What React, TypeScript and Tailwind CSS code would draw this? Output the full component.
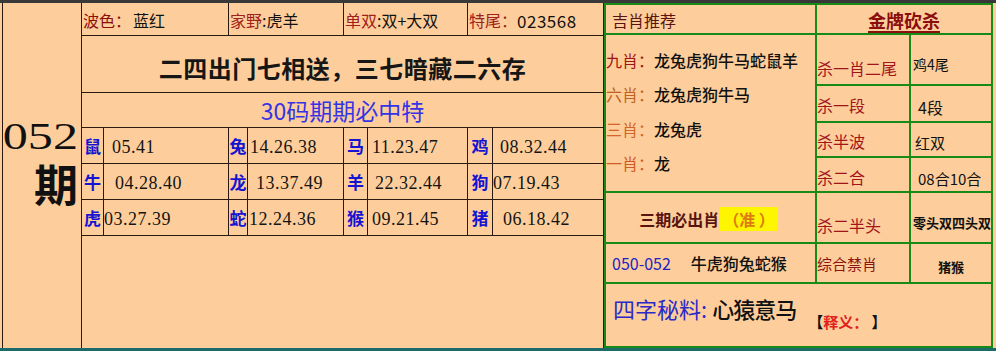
import React from "react";

type Cell = { l: string; v: string; pad: string };

const gridRows: Cell[][] = [
  [
    { l: "鼠", v: "05.41", pad: "pl-[8px]" },
    { l: "兔", v: "14.26.38", pad: "pl-[2px]" },
    { l: "马", v: "11.23.47", pad: "pl-[4px]" },
    { l: "鸡", v: "08.32.44", pad: "pl-[7px]" },
  ],
  [
    { l: "牛", v: "04.28.40", pad: "pl-[11px]" },
    { l: "龙", v: "13.37.49", pad: "pl-[8px]" },
    { l: "羊", v: "22.32.44", pad: "pl-[7px]" },
    { l: "狗", v: "07.19.43", pad: "pl-[0px]" },
  ],
  [
    { l: "虎", v: "03.27.39", pad: "pl-[0px]" },
    { l: "蛇", v: "12.24.36", pad: "pl-[1px]" },
    { l: "猴", v: "09.21.45", pad: "pl-[4px]" },
    { l: "猪", v: "06.18.42", pad: "pl-[10px]" },
  ],
];

const widths = [
  ["w-[22px]", "w-[125px]"],
  ["w-[19px]", "w-[96px]"],
  ["w-[24px]", "w-[100px]"],
  ["w-[25px]", "w-[111px]"],
];

function GridRow({ row }: { row: Cell[] }) {
  return (
    <div className="flex h-[36px] border-b border-[#2a1a10]">
      {row.map((c, i) => (
        <React.Fragment key={i}>
          <div
            className={`${widths[i][0]} shrink-0 border-r border-[#2a1a10] flex items-center justify-center text-[17px] font-bold text-[#1414d2]`}
          >
            {c.l}
          </div>
          <div
            className={`${widths[i][1]} ${c.pad} shrink-0 border-r border-[#2a1a10] flex items-center font-['Liberation_Serif',serif] text-[18px] tracking-[0.5px] text-[#141414] pt-[2px]`}
          >
            {c.v}
          </div>
        </React.Fragment>
      ))}
    </div>
  );
}

export default function App() {
  return (
    <div className="w-[996px] h-[351px] bg-[#fdce9b] font-['Noto_Sans_CJK_SC',sans-serif] leading-none overflow-hidden flex flex-col">
      <div className="h-[3px] bg-[#383838] shrink-0" />
      <div className="flex h-[345px] shrink-0">
        {/* left period column */}
        <div className="w-[82px] shrink-0 pl-[2px] flex">
          <div className="flex-1 border-l border-r border-[#2a1a10] flex flex-col items-end justify-center pr-[3px] pb-[26px]">
            <div className="font-['Liberation_Serif',serif] text-[38px] text-[#111] inline-block scale-x-[1.32] origin-right leading-[32px] h-[32px]">
              052
            </div>
            <div className="text-[44px] font-bold text-[#111] leading-none mt-[9px]">期</div>
          </div>
        </div>

        {/* middle table */}
        <div className="w-[522px] shrink-0 flex flex-col">
          <div className="flex h-[33px] border-b border-[#2a1a10] text-[16px]">
            <div className="w-[147px] border-r border-[#2a1a10] flex items-center pt-[2px] pl-[1px]">
              <span className="text-[#8b0d0d]">波色：</span>
              <span className="text-[#111] ml-[2px]">蓝红</span>
            </div>
            <div className="w-[115px] border-r border-[#2a1a10] flex items-center pt-[2px] pl-[1px]">
              <span className="text-[#a0201c]">家野</span>
              <span className="text-[#111]">:虎羊</span>
            </div>
            <div className="w-[124px] border-r border-[#2a1a10] flex items-center pt-[2px] pl-[1px]">
              <span className="text-[#a0201c]">单双</span>
              <span className="text-[#111]">:双+大双</span>
            </div>
            <div className="w-[136px] border-r border-[#2a1a10] flex items-center pt-[2px] pl-[1px]">
              <span className="text-[#a0201c]">特尾：</span>
              <span className="text-[#111] text-[17px] tracking-[0.5px]">023568</span>
            </div>
          </div>
          <div className="h-[57px] border-b border-r border-[#2a1a10] flex items-center justify-center pt-[8px] text-[24px] font-bold text-[#161616] tracking-[0.5px]">
            二四出门七相送，三七暗藏二六存
          </div>
          <div className="h-[35px] border-b border-r border-[#2a1a10] flex items-center justify-center pt-[1px] text-[23px] text-[#3434e6]">
            30码期期必中特
          </div>
          {gridRows.map((r, i) => (
            <GridRow key={i} row={r} />
          ))}
          <div className="flex-1 border-r border-[#2a1a10]" />
        </div>

        {/* right panel */}
        <div className="w-[392px] shrink-0 flex">
          <div className="w-[389px] grid bg-[#178a17] p-[2px] gap-[2px] grid-cols-[209px_92px_80px] grid-rows-[28px_49px_35px_33px_33px_49px_38px_62px]">
            <div className="bg-[#fdce9b] flex items-center pl-[6px] pt-[2px] text-[16px] text-[#5a1410]">
              吉肖推荐
            </div>
            <div className="col-span-2 bg-[#fdce9b] flex items-center justify-center pt-[2px]">
              <span className="text-[18px] font-bold text-[#8b0d0d] underline underline-offset-[3px] decoration-[1.5px]">
                金牌砍杀
              </span>
            </div>

            <div className="row-span-4 bg-[#fdce9b] flex flex-col pt-[8px] text-[16px]">
              <div className="h-[34px] flex items-center">
                <span className="text-[#a01412] w-[48px]">九肖：</span>
                <span className="font-medium text-[#111]">龙兔虎狗牛马蛇鼠羊</span>
              </div>
              <div className="h-[34px] flex items-center">
                <span className="text-[#c0621e] w-[48px]">六肖：</span>
                <span className="font-medium text-[#111]">龙兔虎狗牛马</span>
              </div>
              <div className="h-[35px] flex items-center">
                <span className="text-[#d0662a] w-[48px]">三肖：</span>
                <span className="font-medium text-[#111]">龙兔虎</span>
              </div>
              <div className="h-[34px] flex items-center">
                <span className="text-[#d05a26] w-[48px]">一肖：</span>
                <span className="font-medium text-[#111]">龙</span>
              </div>
            </div>

            <div className="bg-[#fdce9b] flex items-center pt-[16px] text-[16px] text-[#a0141a]">杀一肖二尾</div>
            <div className="bg-[#fdce9b] flex items-center pl-[2px] pt-[8px] text-[14px] text-[#111]">鸡4尾</div>

            <div className="bg-[#fdce9b] flex items-center pt-[2px] text-[16px] text-[#a0141a]">杀一段</div>
            <div className="bg-[#fdce9b] flex items-center pl-[7px] pt-[6px] text-[16px] text-[#111]">4段</div>

            <div className="bg-[#fdce9b] flex items-center pt-[3px] text-[16px] text-[#a0141a]">杀半波</div>
            <div className="bg-[#fdce9b] flex items-center pl-[4px] pt-[5px] text-[15px] text-[#111]">红双</div>

            <div className="bg-[#fdce9b] flex items-center pt-[5px] text-[16px] text-[#a0141a]">杀二合</div>
            <div className="bg-[#fdce9b] flex items-center pl-[7px] pt-[7px] text-[15px] text-[#111]">08合10合</div>

            <div className="bg-[#fdce9b] flex items-center justify-center pr-[4px] pt-[2px] text-[16px] font-bold">
              <span className="text-[#5a1410]">三期必出肖</span>
              <span className="bg-[#fdf600] text-[#e07a12] px-[3px] py-[4px] ml-[1px]">（准 ）</span>
            </div>
            <div className="bg-[#fdce9b] flex items-center pt-[14px] text-[16px] text-[#a0141a]">杀二半头</div>
            <div className="bg-[#fdce9b] flex items-center pl-[2px] pt-[10px] text-[13px] font-bold text-[#111] whitespace-nowrap overflow-hidden">
              零头双四头双
            </div>

            <div className="bg-[#fdce9b] flex items-center pl-[6px] text-[16px]">
              <span className="text-[#2222c4]">050-052</span>
              <span className="ml-[20px] text-[#111] font-medium">牛虎狗兔蛇猴</span>
            </div>
            <div className="bg-[#fdce9b] flex items-center text-[15px] text-[#8b1414]">综合禁肖</div>
            <div className="bg-[#fdce9b] flex items-center justify-center pt-[6px] text-[13px] font-bold text-[#111]">猪猴</div>

            <div className="col-span-3 bg-[#fdce9b] flex items-center pl-[7px]">
              <span className="text-[22px] text-[#2a2ac8] mb-[14px]">四字秘料:</span>
              <span className="text-[22px] text-[#111] ml-[5px] mb-[14px] font-medium tracking-[-1px]">心猿意马</span>
              <span className="text-[15px] font-bold ml-[12px] mt-[12px]">
                <span className="text-[#111]">【</span>
                <span className="text-[#e0201c]">释义：</span>
                <span className="text-[#111]"> 】</span>
              </span>
            </div>
          </div>
          <div className="w-[3px]" />
        </div>
      </div>
      <div className="h-[3px] bg-[#1c6b6b] shrink-0" />
    </div>
  );
}
